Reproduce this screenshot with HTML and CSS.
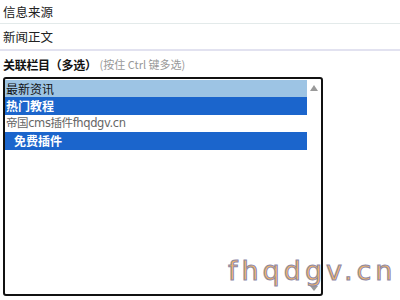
FILE: index.html
```html
<!DOCTYPE html>
<html>
<head>
<meta charset="utf-8">
<link rel="stylesheet" href="styles.css">
</head>
<body>
<div class="page">
  <div class="row row-first">信息来源</div>
  <div class="row row-second">新闻正文</div>
  <div class="label"><b>关联栏目（多选）</b><span class="hint">(按住 Ctrl 键多选)</span></div>
  <div class="listbox">
    <div class="options">
      <div class="opt opt-focus">最新资讯</div>
      <div class="opt opt-sel">热门教程</div>
      <div class="opt opt-plain">帝国cms插件fhqdgv.cn</div>
      <div class="opt opt-sel opt-indent">免费插件</div>
    </div>
    <div class="scroll">
      <span class="arrow arrow-up"></span>
      <span class="arrow arrow-down"></span>
    </div>
  </div>
  <div class="watermark">fhqdgv.cn</div>
</div>
</body>
</html>
```
FILE: styles.css
```css
html, body {
  margin: 0;
  padding: 0;
  background: #fff;
}
.page {
  position: relative;
  width: 400px;
  height: 300px;
  overflow: hidden;
  font-family: "Noto Sans CJK SC", "DejaVu Sans", sans-serif;
  font-size: 12.5px;
  color: #222;
}
.row {
  padding-left: 3px;
  display: flex;
  align-items: center;
}
.row-first {
  height: 23px;
  border-bottom: 1px solid #e3eaea;
}
.row-second {
  height: 25px;
  border-bottom: 2px solid #e2e2f0;
}
.label {
  height: 26px;
  padding-left: 3px;
  display: flex;
  align-items: center;
  gap: 3px;
  color: #111;
  font-size: 12px;
}
.label b {
  font-weight: bold;
  letter-spacing: -0.3px;
}
.hint {
  color: #999;
  font-size: 11px;
}
.listbox {
  margin-left: 3px;
  width: 316px;
  height: 214px;
  border: 2px solid #111;
  border-radius: 3px;
  display: flex;
  padding-top: 1px;
  box-sizing: content-box;
}
.options {
  width: 302px;
  display: flex;
  flex-direction: column;
  font-size: 12px;
}
.opt {
  height: 17.4px;
  line-height: 17px;
  padding-left: 1px;
  white-space: nowrap;
  overflow: hidden;
}
.opt-focus {
  background: #9dc4e4;
  color: #111;
}
.opt-sel {
  background: #1b65cc;
  color: #fff;
  font-weight: bold;
}
.opt-plain {
  color: #666;
  font-family: "DejaVu Sans", "Noto Sans CJK SC", sans-serif;
  font-size: 11.5px;
  letter-spacing: -0.4px;
}
.opt-indent {
  padding-left: 9px;
}
.scroll {
  flex: 1;
  position: relative;
}
.arrow {
  position: absolute;
  left: 3px;
  width: 0;
  height: 0;
  border-left: 4px solid transparent;
  border-right: 4px solid transparent;
}
.arrow-up {
  top: 5px;
  border-bottom: 6px solid #9a9a9a;
}
.arrow-down {
  bottom: 3px;
  border-top: 5px solid #9a9a9a;
}
.watermark {
  position: absolute;
  left: 228px;
  top: 251px;
  font-family: "DejaVu Sans", sans-serif;
  font-size: 27px;
  letter-spacing: 4px;
  color: #f3b565;
  -webkit-text-stroke: 1px #8c88a8;
  line-height: 40px;
}
```
